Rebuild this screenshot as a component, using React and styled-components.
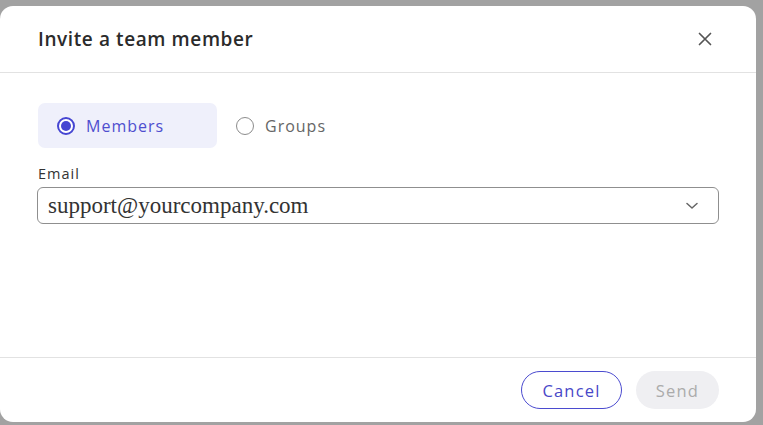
import React from "react";
import styled, { createGlobalStyle } from "styled-components";

const Global = createGlobalStyle`
  html, body { margin: 0; padding: 0; background: #a2a2a2; }
  body { font-family: "Open Sans", "Noto Sans", sans-serif; }
  #root { padding-top: 6px; }
`;

const Modal = styled.div`
  width: 756px;
  height: 416px;
  background: #fff;
  border-radius: 13px;
  display: flex;
  flex-direction: column;
  box-sizing: border-box;
  overflow: hidden;
`;

const Header = styled.div`
  height: 67px;
  box-sizing: border-box;
  border-bottom: 1px solid #e2e2e2;
  display: flex;
  align-items: center;
  justify-content: space-between;
  padding: 0 44px 0 38px;
`;

const Title = styled.h2`
  margin: 0;
  font-size: 19px;
  font-weight: 600;
  color: #2b2b2b;
  letter-spacing: 0.6px;
`;

const CloseButton = styled.button`
  border: none;
  background: none;
  padding: 0;
  width: 14px;
  height: 14px;
  display: flex;
  cursor: pointer;
`;

const Body = styled.div`
  flex: 1;
  padding: 30px 37px 0 37px;
  display: flex;
  flex-direction: column;
`;

const RadioRow = styled.div`
  display: flex;
  margin-left: 1px;
`;

const Option = styled.label`
  height: 45px;
  display: flex;
  align-items: center;
  gap: 11px;
  padding: 0 19px;
  box-sizing: border-box;
  border-radius: 7px;
  background: ${(p) => (p.$active ? "#eff0fb" : "transparent")};
  width: ${(p) => p.$width}px;
  font-size: 16px;
  letter-spacing: 1px;
  color: ${(p) => (p.$active ? "#4e4ecf" : "#666")};
  cursor: pointer;
`;

const RadioCircle = styled.span`
  width: 18px;
  height: 18px;
  box-sizing: border-box;
  border-radius: 50%;
  border: ${(p) => (p.$active ? "2px solid #4646d2" : "1.5px solid #8c8c8c")};
  display: flex;
  align-items: center;
  justify-content: center;
  background: #fff;
  flex-shrink: 0;
  &::after {
    content: "";
    display: ${(p) => (p.$active ? "block" : "none")};
    width: 10px;
    height: 10px;
    border-radius: 50%;
    background: #4646d2;
  }
`;

const Field = styled.div`
  margin-top: 16px;
  display: flex;
  flex-direction: column;
  gap: 3px;
`;

const Label = styled.span`
  font-size: 14.5px;
  color: #333;
  line-height: 20px;
  letter-spacing: 1px;
  margin-left: 1px;
`;

const Select = styled.div`
  height: 37px;
  box-sizing: border-box;
  border: 1px solid #8f8f8f;
  border-radius: 6px;
  display: flex;
  align-items: center;
  justify-content: space-between;
  padding: 0 20px 0 10px;
  width: 682px;
`;

const SelectValue = styled.span`
  font-family: "Liberation Serif", serif;
  font-size: 23px;
  color: #333;
`;

const Footer = styled.div`
  height: 65px;
  box-sizing: border-box;
  border-top: 1px solid #e2e2e2;
  display: flex;
  justify-content: flex-end;
  align-items: flex-start;
  padding: 13px 37px 0 0;
  gap: 14px;
`;

const Button = styled.button`
  height: 38px;
  border-radius: 19px;
  font-family: "Open Sans", "Noto Sans", sans-serif;
  font-size: 16.5px;
  letter-spacing: 1.2px;
  width: ${(p) => p.$width}px;
  box-sizing: border-box;
  cursor: pointer;
  border: ${(p) => (p.$variant === "outline" ? "1px solid #4b4bcf" : "none")};
  background: ${(p) => (p.$variant === "outline" ? "#fff" : "#efeff2")};
  color: ${(p) => (p.$variant === "outline" ? "#4848c8" : "#ababab")};
`;

export default function App() {
  return (
    <>
      <Global />
      <Modal>
        <Header>
          <Title>Invite a team member</Title>
          <CloseButton aria-label="Close">
            <svg width="14" height="14" viewBox="0 0 14 14">
              <path d="M1.5 1.5 L12.5 12.5 M12.5 1.5 L1.5 12.5" stroke="#555" strokeWidth="1.7" strokeLinecap="round" />
            </svg>
          </CloseButton>
        </Header>
        <Body>
          <RadioRow>
            <Option $active $width={179}>
              <RadioCircle $active />
              Members
            </Option>
            <Option $width={140}>
              <RadioCircle />
              Groups
            </Option>
          </RadioRow>
          <Field>
            <Label>Email</Label>
            <Select>
              <SelectValue>support@yourcompany.com</SelectValue>
              <svg width="12" height="8" viewBox="0 0 12 8">
                <path d="M1 1.5 L6 6 L11 1.5" fill="none" stroke="#666" strokeWidth="1.5" strokeLinecap="round" strokeLinejoin="round" />
              </svg>
            </Select>
          </Field>
        </Body>
        <Footer>
          <Button $variant="outline" $width={101}>Cancel</Button>
          <Button $width={83}>Send</Button>
        </Footer>
      </Modal>
    </>
  );
}
